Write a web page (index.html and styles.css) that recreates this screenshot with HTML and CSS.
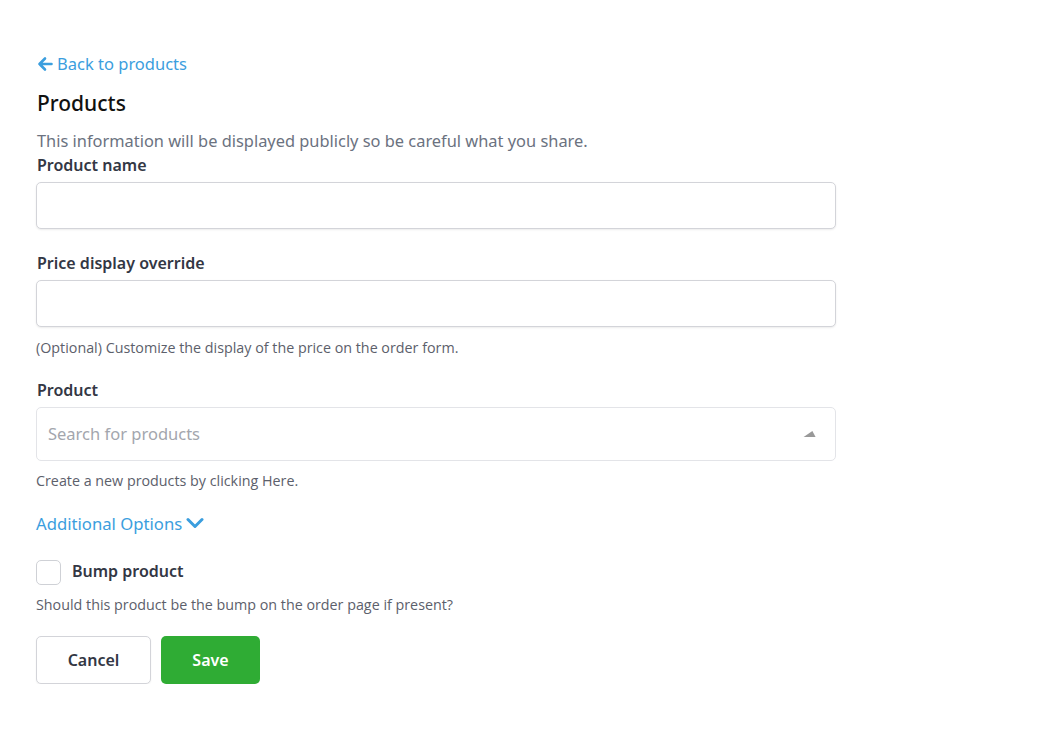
FILE: index.html
```html
<!DOCTYPE html>
<html lang="en">
<head>
  <meta charset="UTF-8">
  <title>Edit product</title>
  <link rel="stylesheet" href="styles.css">
</head>
<body>
  <main class="page">
    <a class="back-link" href="#">
      <svg class="back-icon" viewBox="0 0 16 16" aria-hidden="true"><path d="M14.5 8H2.5M8 2.5L2.5 8L8 13.5"/></svg>
      Back to products
    </a>

    <h1 class="title">Products</h1>
    <p class="intro">This information will be displayed publicly so be careful what you share.</p>

    <form class="form">
      <div class="field field-first">
        <label class="label" for="name">Product name</label>
        <input class="input" id="name" type="text">
      </div>

      <div class="field">
        <label class="label" for="price">Price display override</label>
        <input class="input" id="price" type="text">
        <p class="help">(Optional) Customize the display of the price on the order form.</p>
      </div>

      <div class="field">
        <label class="label" for="product">Product</label>
        <div class="select">
          <span class="select-placeholder">Search for products</span>
          <span class="select-caret"></span>
        </div>
        <p class="help help-tight">Create a new products by clicking Here.</p>
      </div>

      <a class="toggle-link" href="#">
        Additional Options
        <svg class="chevron" viewBox="0 0 18 12" aria-hidden="true"><path d="M2 2.5L9 9.5L16 2.5"/></svg>
      </a>

      <div class="field check-field">
        <label class="check">
          <input class="check-box" type="checkbox">
          <span class="check-label">Bump product</span>
        </label>
        <p class="help">Should this product be the bump on the order page if present?</p>
      </div>

      <div class="actions">
        <button class="btn btn-cancel" type="button">Cancel</button>
        <button class="btn btn-save" type="button">Save</button>
      </div>
    </form>
  </main>
</body>
</html>
```

FILE: styles.css
```css
/* Product edit form */
:root {
  --blue:   #3b9ede;
  --text:   #1f2430;
  --label:  #333744;
  --muted:  #6b7280;
  --border: #d3d4d9;
  --green:  #2fac34;
}

body {
  margin: 0;
  font-family: "Noto Sans", "Open Sans", sans-serif;
  color: var(--text);
  background: #fff;
}

.page {
  width: 800px;
  padding: 52px 0 0 36px;
}

.back-link {
  display: inline-flex;
  align-items: center;
  gap: 4px;
  color: var(--blue);
  font-size: 16.5px;
  text-decoration: none;
  margin-left: 1px;
}
.back-icon {
  width: 16px;
  height: 16px;
  fill: none;
  stroke: var(--blue);
  stroke-width: 2.6;
  stroke-linecap: round;
  stroke-linejoin: round;
}

.title {
  font-size: 21px;
  font-weight: 500;
  margin: 12px 0 0 1px;
  color: #111;
}

.intro {
  font-size: 16.4px;
  color: var(--muted);
  margin: 12px 0 2px 1px;
}

.form {
  margin: 0;
}

.field {
  margin-top: 0;
  margin-bottom: 22px;
}
.field-first {
  margin-bottom: 23px;
}

.label {
  display: block;
  font-size: 16px;
  font-weight: 600;
  color: var(--label);
  margin: 0 0 6px 1px;
}

.input {
  display: block;
  box-sizing: border-box;
  width: 800px;
  height: 47px;
  border: 1px solid var(--border);
  border-radius: 5px;
  box-shadow: 0 1px 2px rgba(0, 0, 0, 0.08);
  font: inherit;
}

.help {
  font-family: "Open Sans", sans-serif;
  font-size: 14.3px;
  line-height: 18px;
  color: #5c606b;
  margin: 12px 0 0;
}
.help-tight {
  margin-top: 11px;
}

.select {
  box-sizing: border-box;
  width: 800px;
  height: 54px;
  border: 1px solid #e3e4e8;
  border-radius: 5px;
  display: flex;
  align-items: center;
  justify-content: space-between;
  padding: 0 18px 0 11px;
}
.select-placeholder {
  font-size: 16.5px;
  color: #a3a6ad;
}
.select-caret {
  width: 0;
  height: 0;
  border-left: 6px solid transparent;
  border-right: 6px solid transparent;
  border-bottom: 6px solid #999;
  transform: skewX(-25deg);
}

.toggle-link {
  display: inline-flex;
  align-items: center;
  gap: 4px;
  color: var(--blue);
  font-size: 16.7px;
  text-decoration: none;
  margin-bottom: 25px;
}
.chevron {
  width: 18px;
  height: 12px;
  fill: none;
  stroke: var(--blue);
  stroke-width: 3;
  stroke-linecap: round;
  stroke-linejoin: round;
}

.check {
  display: flex;
  align-items: center;
  gap: 11px;
}
.check-box {
  appearance: none;
  width: 25px;
  height: 25px;
  margin: 0;
  border: 1px solid #cfd1d6;
  border-radius: 5px;
  background: #fff;
}
.check-label {
  font-size: 16px;
  font-weight: 600;
  color: var(--label);
  margin-top: -3px;
}
.check-field .help {
  margin-top: 11px;
}

.actions {
  display: flex;
  gap: 10px;
  margin-top: 16px;
}

.btn {
  height: 48px;
  border-radius: 5px;
  font-family: "Noto Sans", sans-serif;
  font-size: 16px;
  font-weight: 600;
  cursor: pointer;
}
.btn-cancel {
  width: 115px;
  background: #fff;
  color: var(--label);
  border: 1px solid var(--border);
  box-shadow: 0 1px 2px rgba(0, 0, 0, 0.06);
}
.btn-save {
  width: 99px;
  background: var(--green);
  color: #fff;
  border: 0;
}
```
